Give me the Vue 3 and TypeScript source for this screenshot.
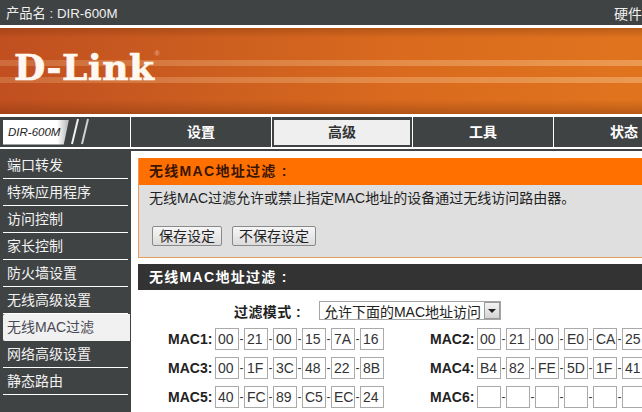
<script setup lang="ts">
const navItems = [
  { label: '设置', active: false },
  { label: '高级', active: true },
  { label: '工具', active: false },
  { label: '状态', active: false },
]
const sideItems = ['端口转发', '特殊应用程序', '访问控制', '家长控制', '防火墙设置', '无线高级设置', '无线MAC过滤', '网络高级设置', '静态路由']
const activeSide = '无线MAC过滤'
const macs = [
  { label: 'MAC1:', parts: ['00', '21', '00', '15', '7A', '16'] },
  { label: 'MAC2:', parts: ['00', '21', '00', 'E0', 'CA', '25'] },
  { label: 'MAC3:', parts: ['00', '1F', '3C', '48', '22', '8B'] },
  { label: 'MAC4:', parts: ['B4', '82', 'FE', '5D', '1F', '41'] },
  { label: 'MAC5:', parts: ['40', 'FC', '89', 'C5', 'EC', '24'] },
  { label: 'MAC6:', parts: ['', '', '', '', '', ''] },
]
</script>

<template>
  <div class="page">
    <div class="topbar">
      <span>产品名 : DIR-600M</span>
      <span class="hw">硬件</span>
    </div>
    <div class="banner">
      <div class="stripe s1"></div>
      <div class="stripe s2"></div>
      <div class="logo">D-Link<sup>®</sup></div>
    </div>
    <div class="nav">
      <div class="model-cell">
        <div class="model">DIR-600M</div>
        <svg class="slashes" width="24" height="30" viewBox="0 0 24 30">
          <path d="M7 2 L1 27" stroke="#f0f0f0" stroke-width="2" fill="none" />
          <path d="M17 2 L11 27" stroke="#d0d0d0" stroke-width="2" fill="none" />
        </svg>
      </div>
      <div v-for="n in navItems" :key="n.label" class="tab" :class="{ on: n.active }">{{ n.label }}</div>
    </div>
    <div class="main">
      <aside class="side">
        <div v-for="s in sideItems" :key="s" class="side-item" :class="{ cur: s === activeSide }">{{ s }}</div>
      </aside>
      <section class="content">
        <div class="notice">
          <h2 class="notice-head">无线MAC地址过滤 :</h2>
          <div class="notice-body">
            <p class="desc">无线MAC过滤允许或禁止指定MAC地址的设备通过无线访问路由器。</p>
            <div class="btns">
              <button class="btn">保存设定</button>
              <button class="btn">不保存设定</button>
            </div>
          </div>
        </div>
        <div class="panel">
          <h2 class="panel-head">无线MAC地址过滤 :</h2>
          <div class="mode">
            <span class="mode-label">过滤模式 :</span>
            <div class="select">
              <span class="select-text">允许下面的MAC地址访问</span>
              <span class="arrow"><i></i></span>
            </div>
          </div>
          <div class="mac-grid">
            <div v-for="m in macs" :key="m.label" class="mac">
              <label class="mac-label">{{ m.label }}</label>
              <template v-for="(p, i) in m.parts" :key="i">
                <input class="octet" :value="p" />
                <span class="dash">{{ i < 5 ? '-' : '' }}</span>
              </template>
            </div>
          </div>
        </div>
      </section>
    </div>
  </div>
</template>

<style>
html, body { margin: 0; overflow: hidden; background: #fff; }
</style>

<style scoped>
.page {
  width: 642px;
  height: 412px;
  overflow: hidden;
  font-family: "Liberation Sans", "Noto Sans CJK SC", sans-serif;
  font-size: 14px;
  color: #222;
  background: #fff;
}
.topbar {
  height: 25px;
  box-sizing: border-box;
  padding-left: 6px;
  display: flex;
  justify-content: space-between;
  align-items: center;
  background: #404344;
  color: #f0f0f0;
  font-size: 13.3px;
  white-space: nowrap;
}
.hw { font-size: 14px; }
.banner {
  position: relative;
  margin-top: 3px;
  height: 86px;
  overflow: hidden;
  background:
    linear-gradient(180deg, rgba(120,50,10,.35) 0, rgba(120,50,10,0) 10px, rgba(120,50,10,0) 72px, rgba(120,50,10,.4) 86px),
    linear-gradient(90deg, #c14f20 0, #c85a20 150px, #d96a1e 400px, #e0741e 642px);
}
.stripe {
  position: absolute;
  left: 0;
  right: 0;
  height: 6px;
  background: linear-gradient(90deg, rgba(255,220,170,.2), rgba(255,220,170,.36));
}
.s1 { top: 32px; }
.s2 { top: 49px; }
.logo {
  position: absolute;
  left: 14px;
  top: 17px;
  font-family: "DejaVu Serif", serif;
  font-weight: 700;
  font-size: 36px;
  line-height: 44px;
  color: #fff8f0;
  letter-spacing: .6px;
  -webkit-text-stroke: .7px #fff8f0;
}
.logo sup {
  font-size: 7px;
  color: #e8a080;
  -webkit-text-stroke: 0;
  vertical-align: 24px;
  line-height: 0;
  font-family: "Liberation Sans", sans-serif;
}
.nav {
  margin-top: 3px;
  height: 30px;
  display: flex;
  gap: 1px;
  background: #fff;
  overflow: hidden;
}
.model-cell {
  width: 130px;
  height: 30px;
  flex: none;
  background: #404344;
  display: flex;
  align-items: center;
  padding-left: 3px;
  box-sizing: border-box;
  gap: 2px;
}
.model {
  width: 66px;
  height: 25px;
  line-height: 25px;
  background: linear-gradient(90deg, #fff 82%, #b5b5b5);
  color: #222;
  font-size: 11.5px;
  font-style: italic;
  box-sizing: border-box;
  padding-left: 5px;
  white-space: nowrap;
  clip-path: polygon(0 0, 100% 0, 92% 100%, 0 100%);
}
.tab {
  width: 140px;
  flex: none;
  height: 30px;
  line-height: 31px;
  text-align: center;
  background: #404344;
  color: #fff;
  font-weight: 700;
  font-size: 14px;
}
.tab.on {
  background: #efefef;
  color: #333;
  box-shadow: inset 0 3px 0 #404344, inset 0 -2px 0 #404344, inset 2px 0 0 #404344, inset -2px 0 0 #404344;
}
.main {
  margin-top: 2px;
  display: flex;
  height: 263px;
  background: #fff;
}
.side {
  width: 131px;
  flex: none;
  background: #404344;
  box-sizing: border-box;
  padding: 3px 0 0 3px;
}
.side-item {
  width: 125px;
  height: 27px;
  box-sizing: border-box;
  border-bottom: 1px solid #fff;
  padding-left: 4px;
  line-height: 26px;
  color: #f2f2f2;
  font-size: 14px;
  white-space: nowrap;
}
.side-item.cur {
  width: 127px;
  background: #f1f1f1;
  color: #4a4a55;
  border-bottom-color: #f1f1f1;
  border-radius: 2px 0 0 2px;
}
.content {
  flex: 1;
  min-width: 0;
  box-sizing: border-box;
  border-top: 2px solid #404344;
  padding: 7px 0 0 7px;
  overflow: hidden;
}
.notice {
  width: 600px;
  border: 1px solid #e89a5a;
  border-top: 0;
  background: #dfdfdf;
  height: 100px;
  box-sizing: border-box;
}
.notice-head {
  margin: 0;
  height: 27px;
  line-height: 27px;
  padding-left: 10px;
  background: #ff7000;
  color: #3a1500;
  font-size: 14px;
  font-weight: 700;
  letter-spacing: 1.3px;
}
.notice-body { padding: 3px 0 0 10px; }
.desc { margin: 0; font-size: 14px; line-height: 20px; color: #222; white-space: nowrap; }
.btns { margin-top: 18px; display: flex; gap: 10px; padding-left: 3px; }
.btn {
  height: 20px;
  padding: 0 6px;
  border: 1px solid #8a8a8a;
  border-radius: 2px;
  background: linear-gradient(180deg, #f6f6f6, #dcdcdc);
  font-family: inherit;
  font-size: 14px;
  line-height: 18px;
  color: #222;
}
.panel { margin-top: 6px; width: 600px; }
.panel-head {
  margin: 0;
  height: 26px;
  line-height: 26px;
  padding-left: 11px;
  background: #333;
  color: #fff;
  font-size: 14px;
  font-weight: 700;
  letter-spacing: 1.3px;
}
.mode {
  display: flex;
  align-items: center;
  margin-top: 11px;
  height: 19px;
  padding-left: 96px;
}
.mode-label { font-weight: 700; font-size: 14px; color: #222; letter-spacing: .4px; }
.select {
  margin-left: 18px;
  display: flex;
  align-items: center;
  width: 182px;
  height: 19px;
  border: 1px solid #a5a5a5;
  box-sizing: border-box;
  font-size: 14px;
  white-space: nowrap;
}
.select-text { flex: 1; padding-left: 4px; }
.arrow {
  width: 16px;
  height: 17px;
  border: 1px solid #999;
  box-sizing: border-box;
  background: linear-gradient(180deg, #f4f4f4, #d4d4d4);
  display: flex;
  align-items: center;
  justify-content: center;
}
.arrow i { width: 0; height: 0; border: 4px solid transparent; border-top: 4px solid #222; border-bottom: 0; }
.mac-grid {
  margin-top: 8px;
  display: grid;
  grid-template-columns: 262px 262px;
  row-gap: 7px;
  padding-left: 27px;
}
.mac { display: flex; align-items: center; height: 22px; white-space: nowrap; }
.mac-label {
  width: 50px;
  flex: none;
  font-size: 14px;
  font-weight: 700;
  color: #222;
  padding-left: 3px;
  box-sizing: border-box;
}
.octet {
  width: 24px;
  height: 22px;
  flex: none;
  box-sizing: border-box;
  border: 1px solid #aaa;
  padding: 0 0 0 2px;
  margin: 0;
  font-family: inherit;
  font-size: 14px;
  color: #333;
  background: #fff;
  outline: none;
  border-radius: 0;
}
.dash { width: 5px; flex: none; text-align: center; font-size: 12px; color: #333; }
</style>
